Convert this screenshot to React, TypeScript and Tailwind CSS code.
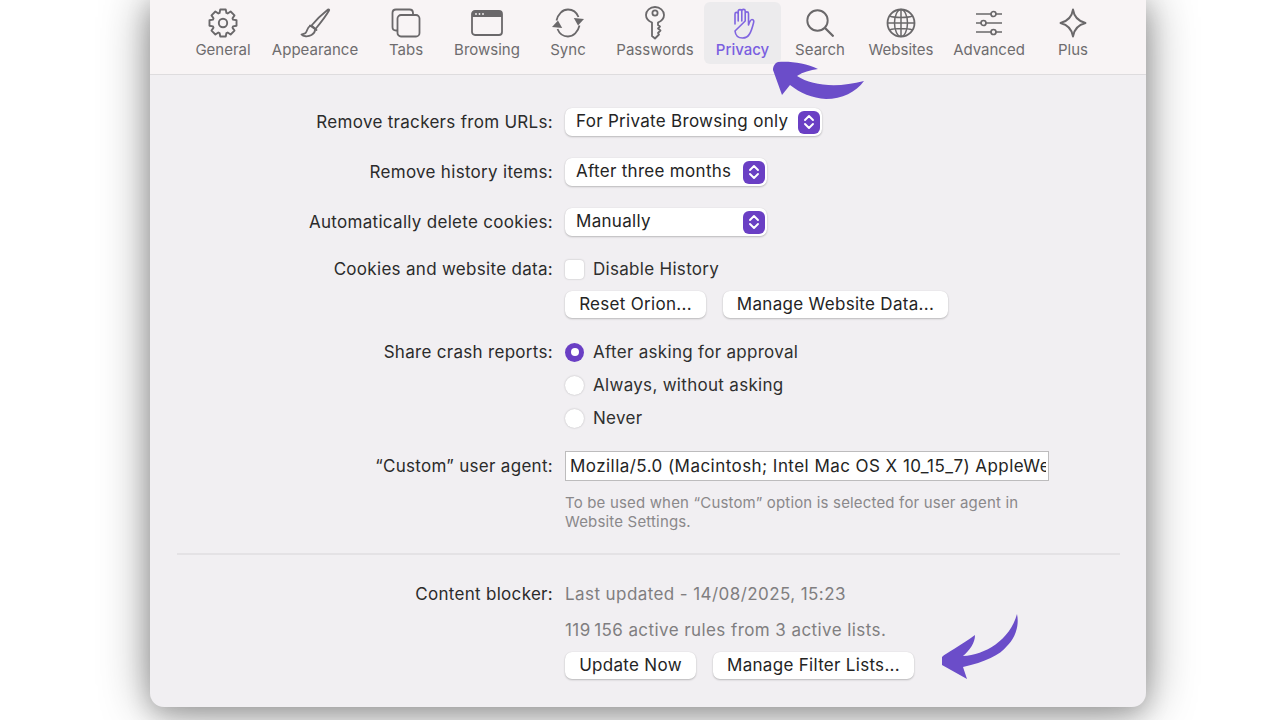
import React from "react";

const ink = "#6a686a";
const Gear = ({ c }: { c: string }) => {
  const pts: string[] = [];
  const n = 8;
  for (let i = 0; i < n; i++) {
    const a = (i / n) * Math.PI * 2 - Math.PI / 2;
    const p = (r: number, t: number) => `${(15 + r * Math.cos(t)).toFixed(2)} ${(15 + r * Math.sin(t)).toFixed(2)}`;
    pts.push(`${i === 0 ? "M" : "L"}${p(10.6, a - 0.33)} L${p(13.8, a - 0.2)} L${p(13.8, a + 0.2)} L${p(10.6, a + 0.33)}`);
  }
  return (
    <svg width="30" height="30" viewBox="0 0 30 30" fill="none" stroke={c} strokeWidth="1.9" strokeLinejoin="round">
      <path d={pts.join(" ") + " Z"} />
      <circle cx="15" cy="15" r="4.2" />
    </svg>
  );
};
const Brush = ({ c }: { c: string }) => (
  <svg width="32" height="30" viewBox="0 0 32 30" fill="none" stroke={c} strokeWidth="1.8" strokeLinejoin="round" strokeLinecap="round">
    <path d="M12.500 17.500 C17 12 24 5.500 29 1.500 C30 1 30.500 1.700 30 2.500 C27 8 21 15.500 16.500 21 Z" />
    <path d="M11 17.500 L17.500 22" />
    <path d="M11 18 C8 19.500 8.500 23 6.500 25 C5 26 3.500 26 2.500 26.500 C4 28.500 9 29 12.500 27 C15 25.500 16 23.500 16 22" />
  </svg>
);
const TabsI = ({ c }: { c: string }) => (
  <svg width="30" height="30" viewBox="0 0 30 30" fill="none" stroke={c} strokeWidth="1.800">
    <path d="M6 22.500 H5 C2.800 22.500 1.500 21.200 1.500 19 V5 C1.500 2.800 2.800 1.500 5 1.500 H18.500 C20.700 1.500 22 2.800 22 5 V7" />
    <rect x="6.500" y="7" width="22" height="21.500" rx="3.500" />
  </svg>
);
const BrowsingI = ({ c }: { c: string }) => (
  <svg width="32" height="26" viewBox="0 0 32 26" fill="none">
    <rect x="1" y="1" width="30" height="24" rx="3" stroke={c} strokeWidth="1.800" />
    <path d="M1 4 a3 3 0 0 1 3 -3 H28 a3 3 0 0 1 3 3 V7 H1 Z" fill={c} />
    <circle cx="5" cy="4" r="0.900" fill="#f6f3f4" />
    <circle cx="8.500" cy="4" r="0.900" fill="#f6f3f4" />
    <circle cx="12" cy="4" r="0.900" fill="#f6f3f4" />
  </svg>
);
const SyncI = ({ c }: { c: string }) => (
  <svg width="34" height="30" viewBox="0 0 34 30" fill="none">
    <path d="M5.500 12.500 C7 6 11.500 1.500 17 1.500 C22 1.500 25.500 4 27.500 9" stroke={c} strokeWidth="1.800" />
    <path d="M28.500 17.500 C27 24 22.500 28.500 17 28.500 C12 28.500 8.500 26 6.500 21" stroke={c} strokeWidth="1.800" />
    <path d="M33 11 L27 17.500 L22.800 10 Z" fill={c} />
    <path d="M1 19 L7 12.500 L11.200 20 Z" fill={c} />
  </svg>
);
const KeyI = ({ c }: { c: string }) => (
  <svg width="20" height="34" viewBox="0 0 20 34" fill="none" stroke={c} strokeWidth="1.800" strokeLinejoin="round">
    <path d="M7 16.500 C3.500 15 1 12.500 1 9 C1 4.500 5 1 10 1 C15 1 19 4.500 19 9 C19 12.500 16.500 15 13 16.500 V19 L15 20.500 L13 22.500 L15.500 24.500 L13 27 L14 28.500 L10 32.500 L7 30 Z" />
    <circle cx="10" cy="7" r="2.600" />
  </svg>
);
const HandI = ({ c }: { c: string }) => (
  <svg width="24" height="31" viewBox="0 0 24 31" fill="none" stroke={c} strokeWidth="1.600" strokeLinecap="round" strokeLinejoin="round">
    <path d="M4 16 V6 C4 3.800 7.200 3.800 7.200 6 V13 M7.200 13 V3.500 C7.200 1 10.800 1 10.800 3.500 V13 M10.800 13 V3 C10.800 0.800 14.200 0.800 14.200 3 V13 M14.200 13 V5.500 C14.200 3.300 17.500 3.300 17.500 5.500 V17 C18.500 14 19.500 11.500 21 11.500 C23 11.500 23 13.500 22.500 15 C21.500 19 20.500 23 18.500 26 C17 28.800 15 30 11.500 30 C7 30 4.500 27.500 4 23 Z" />
  </svg>
);
const SearchI = ({ c }: { c: string }) => (
  <svg width="28" height="28" viewBox="0 0 28 28" fill="none" stroke={c} strokeWidth="1.900" strokeLinecap="round">
    <circle cx="11.500" cy="11.500" r="10.200" />
    <path d="M19 19 L26.800 26.800" strokeWidth="2.300" />
  </svg>
);
const GlobeI = ({ c }: { c: string }) => (
  <svg width="30" height="30" viewBox="0 0 30 30" fill="none" stroke={c} strokeWidth="1.500">
    <circle cx="15" cy="15" r="13.500" strokeWidth="1.800" />
    <ellipse cx="15" cy="15" rx="6.500" ry="13.500" />
    <path d="M15 1.500 V28.500 M1.500 15 H28.500 M3.500 8 C9 10 21 10 26.500 8 M3.500 22 C9 20 21 20 26.500 22" />
  </svg>
);
const SlidersI = ({ c }: { c: string }) => (
  <svg width="28" height="26" viewBox="0 0 28 26" fill="none" stroke={c} strokeWidth="1.700">
    <path d="M1 4 H16 M21 4 H27 M1 13 H6 M11 13 H27 M1 22 H16 M21 22 H27" />
    <circle cx="18.500" cy="4" r="2.500" />
    <circle cx="8.500" cy="13" r="2.500" />
    <circle cx="18.500" cy="22" r="2.500" />
  </svg>
);
const StarI = ({ c }: { c: string }) => (
  <svg width="28" height="30" viewBox="0 0 28 30" fill="none" stroke={c} strokeWidth="1.900" strokeLinejoin="round">
    <path d="M14 1.500 C15 8.500 18.500 13 26.500 15 C18.500 17 15 21.500 14 28.500 C13 21.500 9.500 17 1.500 15 C9.500 13 13 8.500 14 1.500 Z" />
  </svg>
);

const tabs: { label: string; w: string; Icon: React.FC<{ c: string }>; active?: boolean }[] = [
  { label: "General", w: "w-[92px]", Icon: Gear },
  { label: "Appearance", w: "w-[92px]", Icon: Brush },
  { label: "Tabs", w: "w-[90px]", Icon: TabsI },
  { label: "Browsing", w: "w-[72px]", Icon: BrowsingI },
  { label: "Sync", w: "w-[90px]", Icon: SyncI },
  { label: "Passwords", w: "w-[84px]", Icon: KeyI },
  { label: "Privacy", w: "ml-[7px] w-[77px]", Icon: HandI, active: true },
  { label: "Search", w: "w-[78px]", Icon: SearchI },
  { label: "Websites", w: "w-[84px]", Icon: GlobeI },
  { label: "Advanced", w: "w-[92px]", Icon: SlidersI },
  { label: "Plus", w: "w-[76px]", Icon: StarI },
];

const Stepper = () => (
  <span className="flex h-[23px] w-[22px] items-center justify-center rounded-[6px] bg-[#6a3fc4]">
    <svg width="14" height="18" viewBox="0 0 14 18" fill="none" stroke="#ffffff" strokeWidth="1.900" strokeLinecap="round" strokeLinejoin="round">
      <path d="M3 7 L7 3 L11 7 M3 11 L7 15 L11 11" />
    </svg>
  </span>
);

const Select = ({ text, w }: { text: string; w: string }) => (
  <div className={`${w} flex h-[28px] items-center justify-between rounded-[7px] bg-white pl-[11px] pr-[2px] text-[#242424] shadow-[0_1px_2px_rgba(0,0,0,0.22),0_0_1px_rgba(0,0,0,0.12)]`}>
    <span className="pb-[2px]">{text}</span>
    <Stepper />
  </div>
);

const Btn = ({ text, w }: { text: string; w: string }) => (
  <div className={`${w} flex h-[27px] items-center justify-center rounded-[7px] bg-white pb-[2px] text-[#242424] shadow-[0_1px_2px_rgba(0,0,0,0.22),0_0_1px_rgba(0,0,0,0.12)]`}>
    {text}
  </div>
);

const Row = ({ label, className, children }: { label?: string; className?: string; children: React.ReactNode }) => (
  <div className={`grid grid-cols-[403px_1fr] gap-x-3 ${className ?? ""}`}>
    <div className="flex h-full items-center justify-end whitespace-nowrap text-[#2b2b2b]">{label}</div>
    <div className="min-w-0">{children}</div>
  </div>
);

const Radio = ({ text, on }: { text: string; on?: boolean }) => (
  <div className="flex h-[20px] items-center gap-[9px] text-[#2f2f2f]">
    {on ? (
      <span className="flex h-[19px] w-[19px] items-center justify-center rounded-full bg-[#6a3fc4]">
        <span className="h-[8px] w-[8px] rounded-full bg-white" />
      </span>
    ) : (
      <span className="h-[19px] w-[19px] rounded-full bg-white shadow-[0_0_2px_rgba(0,0,0,0.25)]" />
    )}
    <span>{text}</span>
  </div>
);

export default function App() {
  return (
    <div
      className="relative h-[720px] w-[1280px] overflow-hidden bg-white pl-[150px] text-[17px] leading-[20px] tracking-[0.3px]"
      style={{ fontFamily: "Inter, 'Noto Sans', 'Liberation Sans', sans-serif" }}
    >
      <div className="h-[707px] w-[996px] overflow-hidden rounded-b-[14px] bg-[#f1eff2] shadow-[0_0_50px_rgba(0,0,0,0.42),0_8px_24px_rgba(0,0,0,0.2)]">
        <div className="flex h-[75px] justify-start border-b border-[#dedcde] bg-[#f8f4f5] pl-[27px] pt-[2px] tracking-normal">
          {tabs.map((t) => (
            <div
              key={t.label}
              className={`${t.w} flex h-[62px] shrink-0 flex-col items-center rounded-[6px] ${t.active ? "bg-[#ecebed]" : ""}`}
            >
              <div className="flex h-[38px] items-center justify-center pt-[4px]">
                <t.Icon c={t.active ? "#8065e0" : ink} />
              </div>
              <div className={`whitespace-nowrap text-[15px] leading-[20px] ${t.active ? "font-medium text-[#7a5fe0]" : "text-[#6e6c6e]"}`}>
                {t.label}
              </div>
            </div>
          ))}
        </div>

        <Row label="Remove trackers from URLs:" className="mt-[33px] h-[28px]">
          <Select text="For Private Browsing only" w="w-[257px]" />
        </Row>
        <Row label="Remove history items:" className="mt-[22px] h-[28px]">
          <Select text="After three months" w="w-[202px]" />
        </Row>
        <Row label="Automatically delete cookies:" className="mt-[22px] h-[28px]">
          <Select text="Manually" w="w-[202px]" />
        </Row>
        <Row label="Cookies and website data:" className="mt-[23px] h-[20px]">
          <div className="flex h-[20px] items-center gap-[9px] text-[#2f2f2f]">
            <span className="h-[19px] w-[19px] rounded-[4px] bg-white shadow-[0_0_2px_rgba(0,0,0,0.25)]" />
            <span>Disable History</span>
          </div>
        </Row>
        <Row className="mt-[12px] h-[27px]">
          <div className="flex gap-[17px]">
            <Btn text="Reset Orion..." w="w-[141px]" />
            <Btn text="Manage Website Data..." w="w-[225px]" />
          </div>
        </Row>
        <Row label="Share crash reports:" className="mt-[24px] h-[20px]">
          <Radio text="After asking for approval" on />
        </Row>
        <Row className="mt-[13px] h-[20px]">
          <Radio text="Always, without asking" />
        </Row>
        <Row className="mt-[13px] h-[20px]">
          <Radio text="Never" />
        </Row>
        <Row label="“Custom” user agent:" className="mt-[23px] h-[30px]">
          <div className="flex h-[30px] w-[484px] items-center overflow-hidden whitespace-nowrap border border-[#bdbcbd] bg-white pl-[4px] pr-[2px] tracking-[0.45px] text-[#242424]">
            <span className="block w-full overflow-hidden">Mozilla/5.0 (Macintosh; Intel Mac OS X 10_15_7) AppleWebKit/605.1.15</span>
          </div>
        </Row>
        <Row className="mt-[12px]">
          <p className="w-[484px] text-[15px] leading-[19px] tracking-[0.17px] text-[#8a888a]">
            To be used when “Custom” option is selected for user agent in Website Settings.
          </p>
        </Row>
        <div className="mx-[27px] mt-[22px] h-[2px] w-[943px] bg-[#e4e2e5]" />
        <Row label="Content blocker:" className="mt-[29px] h-[20px]">
          <span className="tracking-[0.42px] text-[#807e80]">Last updated - 14/08/2025, 15:23</span>
        </Row>
        <Row className="mt-[16px] h-[20px]">
          <span className="tracking-[0.42px] text-[#807e80]">{"119\u2009156 active rules from 3 active lists."}</span>
        </Row>
        <Row className="mt-[12px] h-[28px]">
          <div className="flex gap-[17px]">
            <Btn text="Update Now" w="w-[131px]" />
            <Btn text="Manage Filter Lists..." w="w-[201px]" />
          </div>
        </Row>
      </div>

      <svg className="absolute left-[770px] top-[58px]" width="100" height="45" viewBox="770 58 100 45" fill="#6b4dc9">
        <path d="M778 62 C790 61 806 63 818 69 C810 70 803 72 797 76 C812 86 838 88 864 81 C856 92 842 99 826 99 C812 98 800 93 790 85 L782 95 L773 70 C773 66 775 63 778 62 Z" />
      </svg>
      <svg className="absolute left-[938px] top-[610px]" width="84" height="72" viewBox="938 610 84 72" fill="#6b4dc9">
        <path d="M1017 614 C1020 628 1013 641 1007 646 C1000 655 985 662 963 667 L967 679 L942 665 L942 657 C946 653 960 646 975 635 C975 643 970 650 963 656 C985 655 1010 640 1017 614 Z" />
      </svg>
    </div>
  );
}
